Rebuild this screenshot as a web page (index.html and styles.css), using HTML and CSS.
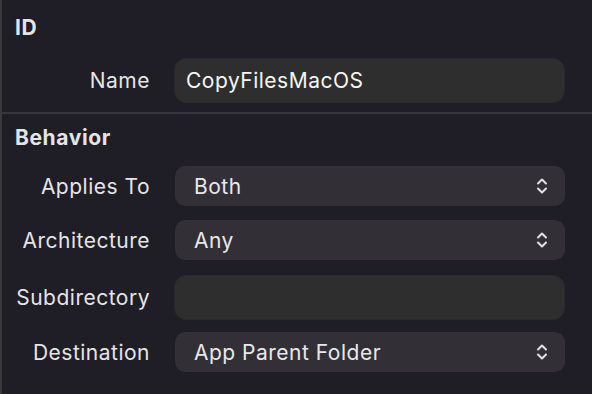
FILE: index.html
```html
<!DOCTYPE html>
<html lang="en">

<head>
    <meta charset="UTF-8">
    <meta name="viewport" content="width=device-width, initial-scale=1.0">
    <title>Build Phase Inspector</title>
    <link rel="stylesheet" href="styles.css">
</head>

<body>
    <div class="panel">
        <section class="section section-id">
            <h2 class="section-title">ID</h2>
            <div class="row row-name">
                <label class="label">Name</label>
                <div class="field">CopyFilesMacOS</div>
            </div>
        </section>

        <section class="section section-behavior">
            <h2 class="section-title">Behavior</h2>
            <div class="row row-applies">
                <label class="label">Applies To</label>
                <div class="popup">
                    <span>Both</span>
                    <svg class="chevron" width="12" height="18" viewBox="0 0 12 18">
                        <path d="M2 6.5 L6 2.5 L10 6.5 M2 11.5 L6 15.5 L10 11.5" />
                    </svg>
                </div>
            </div>
            <div class="row row-arch">
                <label class="label">Architecture</label>
                <div class="popup">
                    <span>Any</span>
                    <svg class="chevron" width="12" height="18" viewBox="0 0 12 18">
                        <path d="M2 6.5 L6 2.5 L10 6.5 M2 11.5 L6 15.5 L10 11.5" />
                    </svg>
                </div>
            </div>
            <div class="row row-subdir">
                <label class="label">Subdirectory</label>
                <div class="field"></div>
            </div>
            <div class="row row-dest">
                <label class="label">Destination</label>
                <div class="popup">
                    <span>App Parent Folder</span>
                    <svg class="chevron" width="12" height="18" viewBox="0 0 12 18">
                        <path d="M2 6.5 L6 2.5 L10 6.5 M2 11.5 L6 15.5 L10 11.5" />
                    </svg>
                </div>
            </div>
        </section>
    </div>
</body>

</html>
```

FILE: styles.css
```css
* {
    box-sizing: border-box;
}

body {
    margin: 0;
    height: 100vh;
    overflow: hidden;
    background-color: #1f1d25;
    color: #e6e6e8;
    font-family: Inter, 'Noto Sans', 'Liberation Sans', sans-serif;
    font-size: 21px;
    letter-spacing: 0.5px;
}

.panel {
    height: 100%;
    border-left: 2px solid #3a3a3c;
}

.section-title {
    margin: 0;
    padding-left: 13px;
    font-size: 21px;
    font-weight: 700;
    line-height: 24px;
    letter-spacing: 0.6px;
    color: #e4e4e6;
}

.section-id {
    padding-top: 16px;
    padding-bottom: 9px;
    border-bottom: 2px solid #37363c;
}

.section-id .section-title {
    margin-bottom: 18px;
}

.section-behavior {
    padding-top: 12px;
}

.section-behavior .section-title {
    margin-bottom: 16px;
}

.row {
    display: grid;
    grid-template-columns: 148px 391px;
    column-gap: 24px;
    align-items: center;
}

.label {
    text-align: right;
    color: #e5e5e7;
}

.field {
    height: 45px;
    padding: 0 11px;
    display: flex;
    align-items: center;
    background-color: #2e2e2e;
    border: 1px solid #29282c;
    border-radius: 12px;
    color: #f6f6f7;
}

.popup {
    height: 40px;
    margin-left: 1px;
    padding: 0 17px 0 19px;
    display: flex;
    align-items: center;
    justify-content: space-between;
    background-color: #323036;
    border-radius: 10px;
    color: #e8e8ea;
}

.chevron path {
    fill: none;
    stroke: #e2e2e4;
    stroke-width: 2;
    stroke-linecap: round;
    stroke-linejoin: round;
}

.row-arch {
    margin-top: 14px;
}

.row-subdir {
    margin-top: 15px;
}

.row-dest {
    margin-top: 12px;
}
```
